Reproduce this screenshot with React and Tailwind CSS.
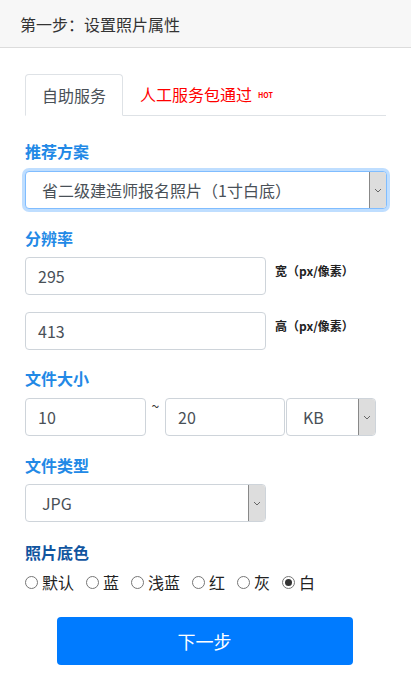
import React from 'react';

const font = { fontFamily: '"Noto Sans CJK SC", "Noto Sans", sans-serif' };

const Chevron = () => (
    <svg width="8" height="5" viewBox="0 0 8 5" fill="none">
        <path d="M1 1l3 3 3-3" stroke="#666" strokeWidth="1" />
    </svg>
);

const FakeSelect = ({ value, className = '', focus = false }) => (
    <div
        className={`flex items-stretch h-[38px] bg-white rounded-[4px] border ${
            focus ? 'border-[#80bdff] shadow-[0_0_0_3px_rgba(0,123,255,0.25)]' : 'border-[#ced4da]'
        } ${className}`}
    >
        <div className="flex-1 flex items-center pl-[16px] text-[16px] text-[#495057]">{value}</div>
        <div className="w-[17px] flex items-center justify-center bg-[#dddddd] border-l border-[#888] rounded-r-[3px]">
            <Chevron />
        </div>
    </div>
);

const Field = ({ value, className = '' }) => (
    <div
        className={`h-[38px] flex items-center pl-[12px] bg-white rounded-[4px] border border-[#ced4da] text-[16px] text-[#495057] ${className}`}
    >
        {value}
    </div>
);

const Label = ({ children, dark = false }) => (
    <div className={`text-[16px] font-bold leading-none ${dark ? 'text-[#11559f]' : 'text-[#2289e6]'}`}>
        {children}
    </div>
);

const Radio = ({ label, checked }) => (
    <label className="flex items-center mr-[12px]">
        <span className="w-[13px] h-[13px] rounded-full border border-[#767676] bg-white flex items-center justify-center mr-[4px]">
            {checked && <span className="w-[7px] h-[7px] rounded-full bg-[#333]" />}
        </span>
        <span className="text-[16px] text-[#222]">{label}</span>
    </label>
);

const App = () => {
    return (
        <div className="w-[411px] min-h-[689px] bg-white" style={font}>
            <div className="h-[48px] bg-[#f7f7f7] border-b border-[#dcdcdc] flex items-center pl-[20px] text-[16px] text-[#333]">
                第一步：设置照片属性
            </div>

            <div className="px-[25px] pt-[25px]">
                <div className="flex items-end border-b border-[#dee2e6] w-[361px]">
                    <div className="w-[98px] h-[42px] -mb-px flex items-center justify-center bg-white border border-[#dee2e6] border-b-white rounded-t-[4px] text-[16px] text-[#495057]">
                        自助服务
                    </div>
                    <div className="h-[42px] flex items-center pl-[17px] text-[16px] text-[#ff0000]">
                        人工服务包通过
                        <span className="ml-[6px] text-[7px] font-bold mt-[2px]">HOT</span>
                    </div>
                </div>

                <div className="mt-[27px]">
                    <Label>推荐方案</Label>
                    <FakeSelect value="省二级建造师报名照片（1寸白底）" focus className="mt-[12px] w-[362px]" />
                </div>

                <div className="mt-[21px]">
                    <Label>分辨率</Label>
                    <div className="flex items-start mt-[11px]">
                        <Field value="295" className="w-[241px]" />
                        <span className="ml-[9px] mt-[5px] text-[12px] font-bold text-[#222]">宽（px/像素）</span>
                    </div>
                    <div className="flex items-start mt-[17px]">
                        <Field value="413" className="w-[241px]" />
                        <span className="ml-[9px] mt-[5px] text-[12px] font-bold text-[#222]">高（px/像素）</span>
                    </div>
                </div>

                <div className="mt-[20px]">
                    <Label>文件大小</Label>
                    <div className="flex items-start mt-[12px]">
                        <Field value="10" className="w-[121px]" />
                        <span className="w-[19px] text-center text-[14px] text-[#333] -mt-[2px]">~</span>
                        <Field value="20" className="w-[120px]" />
                        <FakeSelect value="KB" className="w-[90px] ml-px" />
                    </div>
                </div>

                <div className="mt-[21px]">
                    <Label>文件类型</Label>
                    <FakeSelect value="JPG" className="mt-[11px] w-[241px]" />
                </div>

                <div className="mt-[22px]">
                    <Label dark>照片底色</Label>
                    <div className="flex items-center mt-[10px]">
                        <Radio label="默认" />
                        <Radio label="蓝" />
                        <Radio label="浅蓝" />
                        <Radio label="红" />
                        <Radio label="灰" />
                        <Radio label="白" checked />
                    </div>
                </div>

                <div className="flex justify-center mt-[23px] pr-[2px]">
                    <button className="w-[296px] h-[48px] rounded-[4px] bg-[#007bff] text-white text-[18px]">
                        下一步
                    </button>
                </div>
            </div>
        </div>
    );
};

export default App;
